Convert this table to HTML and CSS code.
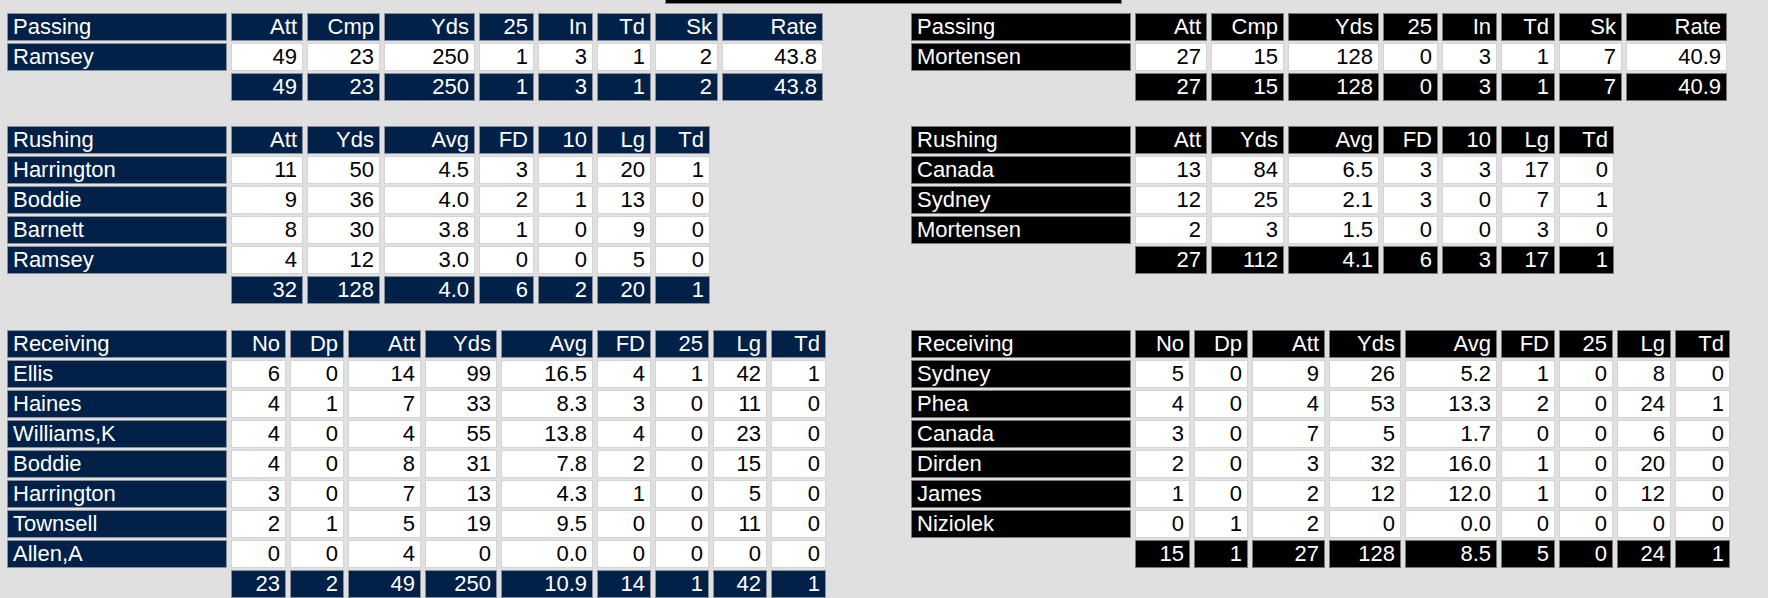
FILE: index.html
```html
<!DOCTYPE html>
<html>
<head>
<meta charset="utf-8">
<link rel="stylesheet" href="styles.css">
</head>
<body>
<div class="topbar"></div>
<div class="sheet">
  <div class="section sec-pass">
    <div class="tbl pass navy">
      <div class="c n">Passing</div><div class="c">Att</div><div class="c">Cmp</div><div class="c">Yds</div><div class="c">25</div><div class="c">In</div><div class="c">Td</div><div class="c">Sk</div><div class="c">Rate</div>
      <div class="c n">Ramsey</div><div class="c w">49</div><div class="c w">23</div><div class="c w">250</div><div class="c w">1</div><div class="c w">3</div><div class="c w">1</div><div class="c w">2</div><div class="c w">43.8</div>
      <div class="e"></div><div class="c">49</div><div class="c">23</div><div class="c">250</div><div class="c">1</div><div class="c">3</div><div class="c">1</div><div class="c">2</div><div class="c">43.8</div>
    </div>
    <div class="tbl pass black">
      <div class="c n">Passing</div><div class="c">Att</div><div class="c">Cmp</div><div class="c">Yds</div><div class="c">25</div><div class="c">In</div><div class="c">Td</div><div class="c">Sk</div><div class="c">Rate</div>
      <div class="c n">Mortensen</div><div class="c w">27</div><div class="c w">15</div><div class="c w">128</div><div class="c w">0</div><div class="c w">3</div><div class="c w">1</div><div class="c w">7</div><div class="c w">40.9</div>
      <div class="e"></div><div class="c">27</div><div class="c">15</div><div class="c">128</div><div class="c">0</div><div class="c">3</div><div class="c">1</div><div class="c">7</div><div class="c">40.9</div>
    </div>
  </div>

  <div class="section sec-rush">
    <div class="tbl rush navy">
      <div class="c n">Rushing</div><div class="c">Att</div><div class="c">Yds</div><div class="c">Avg</div><div class="c">FD</div><div class="c">10</div><div class="c">Lg</div><div class="c">Td</div>
      <div class="c n">Harrington</div><div class="c w">11</div><div class="c w">50</div><div class="c w">4.5</div><div class="c w">3</div><div class="c w">1</div><div class="c w">20</div><div class="c w">1</div>
      <div class="c n">Boddie</div><div class="c w">9</div><div class="c w">36</div><div class="c w">4.0</div><div class="c w">2</div><div class="c w">1</div><div class="c w">13</div><div class="c w">0</div>
      <div class="c n">Barnett</div><div class="c w">8</div><div class="c w">30</div><div class="c w">3.8</div><div class="c w">1</div><div class="c w">0</div><div class="c w">9</div><div class="c w">0</div>
      <div class="c n">Ramsey</div><div class="c w">4</div><div class="c w">12</div><div class="c w">3.0</div><div class="c w">0</div><div class="c w">0</div><div class="c w">5</div><div class="c w">0</div>
      <div class="e"></div><div class="c">32</div><div class="c">128</div><div class="c">4.0</div><div class="c">6</div><div class="c">2</div><div class="c">20</div><div class="c">1</div>
    </div>
    <div class="tbl rush black">
      <div class="c n">Rushing</div><div class="c">Att</div><div class="c">Yds</div><div class="c">Avg</div><div class="c">FD</div><div class="c">10</div><div class="c">Lg</div><div class="c">Td</div>
      <div class="c n">Canada</div><div class="c w">13</div><div class="c w">84</div><div class="c w">6.5</div><div class="c w">3</div><div class="c w">3</div><div class="c w">17</div><div class="c w">0</div>
      <div class="c n">Sydney</div><div class="c w">12</div><div class="c w">25</div><div class="c w">2.1</div><div class="c w">3</div><div class="c w">0</div><div class="c w">7</div><div class="c w">1</div>
      <div class="c n">Mortensen</div><div class="c w">2</div><div class="c w">3</div><div class="c w">1.5</div><div class="c w">0</div><div class="c w">0</div><div class="c w">3</div><div class="c w">0</div>
      <div class="e"></div><div class="c">27</div><div class="c">112</div><div class="c">4.1</div><div class="c">6</div><div class="c">3</div><div class="c">17</div><div class="c">1</div>
    </div>
  </div>

  <div class="section sec-rec">
    <div class="tbl rec navy">
      <div class="c n">Receiving</div><div class="c">No</div><div class="c">Dp</div><div class="c">Att</div><div class="c">Yds</div><div class="c">Avg</div><div class="c">FD</div><div class="c">25</div><div class="c">Lg</div><div class="c">Td</div>
      <div class="c n">Ellis</div><div class="c w">6</div><div class="c w">0</div><div class="c w">14</div><div class="c w">99</div><div class="c w">16.5</div><div class="c w">4</div><div class="c w">1</div><div class="c w">42</div><div class="c w">1</div>
      <div class="c n">Haines</div><div class="c w">4</div><div class="c w">1</div><div class="c w">7</div><div class="c w">33</div><div class="c w">8.3</div><div class="c w">3</div><div class="c w">0</div><div class="c w">11</div><div class="c w">0</div>
      <div class="c n">Williams,K</div><div class="c w">4</div><div class="c w">0</div><div class="c w">4</div><div class="c w">55</div><div class="c w">13.8</div><div class="c w">4</div><div class="c w">0</div><div class="c w">23</div><div class="c w">0</div>
      <div class="c n">Boddie</div><div class="c w">4</div><div class="c w">0</div><div class="c w">8</div><div class="c w">31</div><div class="c w">7.8</div><div class="c w">2</div><div class="c w">0</div><div class="c w">15</div><div class="c w">0</div>
      <div class="c n">Harrington</div><div class="c w">3</div><div class="c w">0</div><div class="c w">7</div><div class="c w">13</div><div class="c w">4.3</div><div class="c w">1</div><div class="c w">0</div><div class="c w">5</div><div class="c w">0</div>
      <div class="c n">Townsell</div><div class="c w">2</div><div class="c w">1</div><div class="c w">5</div><div class="c w">19</div><div class="c w">9.5</div><div class="c w">0</div><div class="c w">0</div><div class="c w">11</div><div class="c w">0</div>
      <div class="c n">Allen,A</div><div class="c w">0</div><div class="c w">0</div><div class="c w">4</div><div class="c w">0</div><div class="c w">0.0</div><div class="c w">0</div><div class="c w">0</div><div class="c w">0</div><div class="c w">0</div>
      <div class="e"></div><div class="c">23</div><div class="c">2</div><div class="c">49</div><div class="c">250</div><div class="c">10.9</div><div class="c">14</div><div class="c">1</div><div class="c">42</div><div class="c">1</div>
    </div>
    <div class="tbl rec black">
      <div class="c n">Receiving</div><div class="c">No</div><div class="c">Dp</div><div class="c">Att</div><div class="c">Yds</div><div class="c">Avg</div><div class="c">FD</div><div class="c">25</div><div class="c">Lg</div><div class="c">Td</div>
      <div class="c n">Sydney</div><div class="c w">5</div><div class="c w">0</div><div class="c w">9</div><div class="c w">26</div><div class="c w">5.2</div><div class="c w">1</div><div class="c w">0</div><div class="c w">8</div><div class="c w">0</div>
      <div class="c n">Phea</div><div class="c w">4</div><div class="c w">0</div><div class="c w">4</div><div class="c w">53</div><div class="c w">13.3</div><div class="c w">2</div><div class="c w">0</div><div class="c w">24</div><div class="c w">1</div>
      <div class="c n">Canada</div><div class="c w">3</div><div class="c w">0</div><div class="c w">7</div><div class="c w">5</div><div class="c w">1.7</div><div class="c w">0</div><div class="c w">0</div><div class="c w">6</div><div class="c w">0</div>
      <div class="c n">Dirden</div><div class="c w">2</div><div class="c w">0</div><div class="c w">3</div><div class="c w">32</div><div class="c w">16.0</div><div class="c w">1</div><div class="c w">0</div><div class="c w">20</div><div class="c w">0</div>
      <div class="c n">James</div><div class="c w">1</div><div class="c w">0</div><div class="c w">2</div><div class="c w">12</div><div class="c w">12.0</div><div class="c w">1</div><div class="c w">0</div><div class="c w">12</div><div class="c w">0</div>
      <div class="c n">Niziolek</div><div class="c w">0</div><div class="c w">1</div><div class="c w">2</div><div class="c w">0</div><div class="c w">0.0</div><div class="c w">0</div><div class="c w">0</div><div class="c w">0</div><div class="c w">0</div>
      <div class="e"></div><div class="c">15</div><div class="c">1</div><div class="c">27</div><div class="c">128</div><div class="c">8.5</div><div class="c">5</div><div class="c">0</div><div class="c">24</div><div class="c">1</div>
    </div>
  </div>
</div>
</body>
</html>
```

FILE: styles.css
```css
html, body {
  margin: 0;
  padding: 0;
  background: #e0e0e0;
  overflow: hidden;
}

body {
  width: 1768px;
  height: 598px;
  font-family: "Liberation Sans", Arial, sans-serif;
  font-size: 22px;
}

.topbar {
  box-sizing: border-box;
  width: 457px;
  height: 4px;
  margin-left: 665px;
  background: #000;
  border: 1px solid #808080;
  border-top: none;
}

.sheet {
  padding: 9px 0 0 7px;
}

.section {
  display: grid;
  grid-template-columns: 904px auto;
  align-items: start;
}

.sec-pass { margin-bottom: 25px; }
.sec-rush { margin-bottom: 26px; }

.tbl {
  display: grid;
  grid-auto-rows: 28px;
  column-gap: 4px;
  row-gap: 2px;
}

.pass { grid-template-columns: 220px 72px 73px 91px 55px 55px 54px 63px 101px; }
.rush { grid-template-columns: 220px 72px 73px 91px 55px 55px 54px 55px; }
.rec  { grid-template-columns: 220px 55px 54px 73px 72px 92px 54px 54px 54px 55px; }

.c {
  box-sizing: border-box;
  border: 1px solid #8a8f99;
  line-height: 26px;
  padding: 0 5px;
  text-align: right;
  white-space: nowrap;
  overflow: hidden;
  color: #fff;
}

.navy .c { background: #012148; }
.black .c { background: #000; border-color: #7a7a7a; }

.c.n {
  text-align: left;
  padding-left: 5px;
}

.tbl .c.w {
  background: #fff;
  color: #000;
  border-color: #d4d4d4;
}
```
